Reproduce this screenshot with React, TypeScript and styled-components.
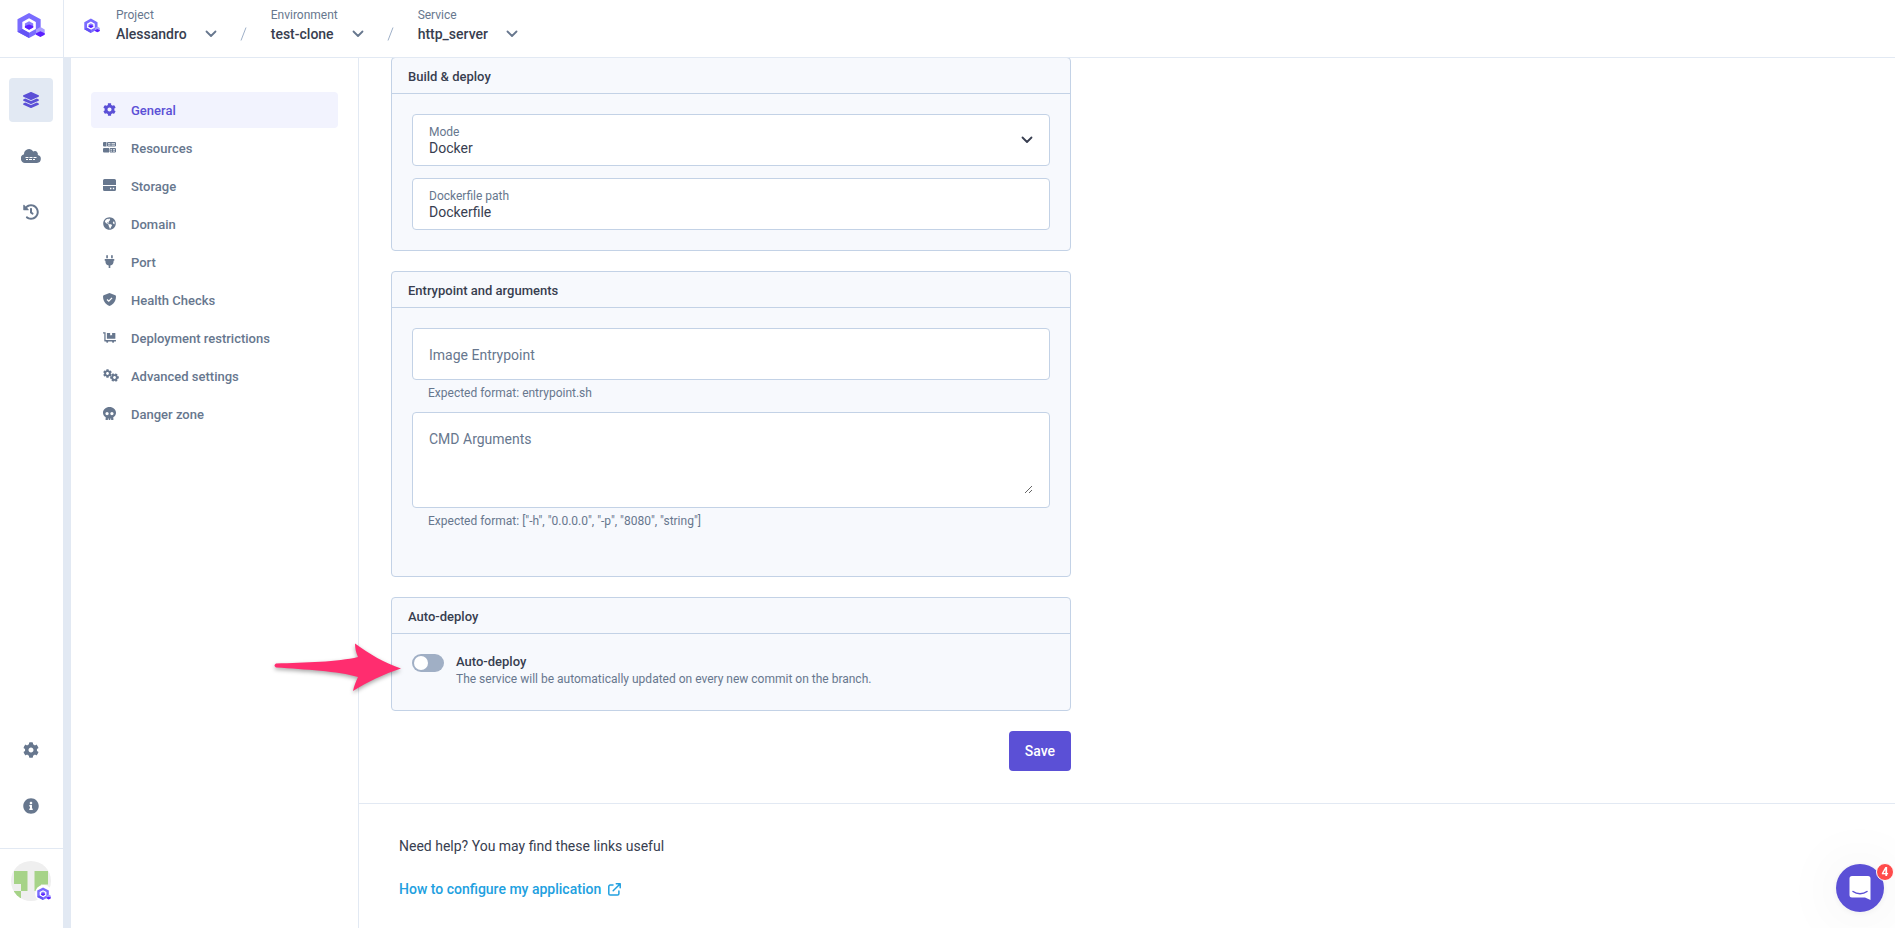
import React, { useState } from 'react';
import styled, { createGlobalStyle } from 'styled-components';
import {
  FaCog,
  FaDollyFlatbed,
  FaGlobeAmericas,
  FaHistory,
  FaInfoCircle,
  FaLayerGroup,
  FaPlug,
  FaSkull,
} from 'react-icons/fa';

const color = {
  brand: '#5b50d6',
  brandSoft: '#f2f3fe',
  line: '#e2e9f3',
  cardLine: '#c3d2e6',
  cardBg: '#f7f9fd',
  text: '#383e50',
  muted: '#67778e',
  toggle: '#a0afc5',
  link: '#21a0e0',
  danger: '#ff4b4b',
  arrow: '#ff2d6f',
};

const GlobalStyle = createGlobalStyle`
  *, *::before, *::after { box-sizing: border-box; }
  body {
    margin: 0;
    background: #fff;
    color: ${color.text};
    font-family: Roboto, "Liberation Sans", sans-serif;
    font-size: 14px;
  }
  button, input, select, textarea { font: inherit; color: inherit; }
`;

const Page = styled.div`
  display: flex;
  flex-direction: column;
  height: 100vh;
  overflow: hidden;
`;

const Header = styled.header`
  position: relative;
  z-index: 1;
  display: flex;
  flex: none;
  height: 58px;
  background: #fff;
  border-bottom: 1px solid ${color.line};
`;

const BrandCell = styled.a`
  display: flex;
  width: 64px;
  padding: 12px 0 0 17px;
  border-right: 1px solid ${color.line};
`;

const Breadcrumb = styled.nav`
  display: flex;
  align-items: flex-start;
  padding: 7px 0 0 20px;
`;

const ProjectMark = styled.span`
  display: flex;
  width: 32px;
  padding-top: 11px;
`;

const Crumb = styled.div`
  display: flex;
  flex-direction: column;
`;

const CrumbLabel = styled.span`
  font-size: 12px;
  line-height: 16px;
  color: ${color.muted};
`;

const CrumbButton = styled.button`
  display: flex;
  align-items: center;
  gap: 18px;
  padding: 0;
  border: 0;
  background: none;
  font-weight: 500;
  line-height: 22px;
  cursor: pointer;
  svg { color: ${color.muted}; }
`;

const Slash = styled.span`
  display: flex;
  padding: 20px 24px 0 23px;
`;

const Body = styled.div`
  display: flex;
  flex: 1;
  min-height: 0;
`;

const Rail = styled.nav`
  display: flex;
  flex-direction: column;
  flex: none;
  width: 63px;
`;

const RailGroup = styled.div<{ $bottom?: boolean }>`
  display: flex;
  flex-direction: column;
  align-items: center;
  gap: 12px;
  padding: ${(p) => (p.$bottom ? '0 1px 20px 0' : '20px 1px 0 0')};
  margin-top: ${(p) => (p.$bottom ? 'auto' : '0')};
`;

const RailLink = styled.a<{ $active?: boolean }>`
  display: flex;
  align-items: center;
  justify-content: center;
  width: 44px;
  height: 44px;
  border-radius: 4px;
  color: ${(p) => (p.$active ? color.brand : color.muted)};
  background: ${(p) => (p.$active ? color.line : 'transparent')};
`;

const AccountCell = styled.div`
  display: flex;
  justify-content: center;
  height: 80px;
  padding: 12px 1px 0 0;
  border-top: 1px solid ${color.line};
`;

const AvatarButton = styled.button`
  position: relative;
  width: 40px;
  height: 40px;
  padding: 0;
  border: 0;
  background: none;
  cursor: pointer;
`;

const OrgBadge = styled.span`
  position: absolute;
  right: -1px;
  bottom: -1px;
  display: flex;
  align-items: center;
  justify-content: center;
  width: 17px;
  height: 17px;
  border-radius: 50%;
  background: #fff;
`;

const Workspace = styled.div`
  display: flex;
  flex: 1;
  min-width: 0;
  border-left: 8px solid ${color.line};
`;

const SettingsNav = styled.nav`
  display: flex;
  flex-direction: column;
  flex: none;
  gap: 2px;
  width: 288px;
  padding: 34px 20px;
  border-right: 1px solid ${color.line};
`;

const NavLink = styled.a<{ $active?: boolean }>`
  display: grid;
  grid-template-columns: 28px 1fr;
  align-items: center;
  height: 36px;
  padding-left: 12px;
  border-radius: 4px;
  font-size: 13px;
  font-weight: 500;
  text-decoration: none;
  color: ${(p) => (p.$active ? color.brand : color.muted)};
  background: ${(p) => (p.$active ? color.brandSoft : 'transparent')};
`;

const NavIcon = styled.span`
  display: flex;
  padding-bottom: 2px;
  > svg { width: auto; height: 13px; }
`;

const Main = styled.main`
  flex: 1;
  min-width: 0;
  margin-top: -1px;
`;

const SettingsForm = styled.form`
  display: flex;
  flex-direction: column;
  gap: 20px;
  max-width: 712px;
  padding: 0 0 32px 32px;
`;

const Card = styled.section`
  border: 1px solid ${color.cardLine};
  border-radius: 4px;
  background: ${color.cardBg};
`;

const CardTitle = styled.h2`
  margin: 0;
  padding: 2px 16px 0;
  border-bottom: 1px solid ${color.cardLine};
  font-size: 13px;
  font-weight: 500;
  line-height: 33px;
`;

const CardBody = styled.div<{ $tall?: boolean }>`
  display: flex;
  flex-direction: column;
  gap: 12px;
  padding: 20px 20px ${(p) => (p.$tall ? '48px' : '20px')};
`;

const FieldBox = styled.div<{ $tall?: boolean }>`
  display: flex;
  align-items: center;
  height: ${(p) => (p.$tall ? '96px' : '52px')};
  padding: 0 16px;
  border: 1px solid ${color.cardLine};
  border-radius: 4px;
  background: #fff;
`;

const FieldStack = styled.div`
  display: flex;
  flex: 1;
  flex-direction: column;
`;

const FieldLabel = styled.label`
  font-size: 12px;
  line-height: 16px;
  color: ${color.muted};
`;

const TextInput = styled.input<{ $full?: boolean }>`
  width: 100%;
  height: ${(p) => (p.$full ? '50px' : 'auto')};
  padding: ${(p) => (p.$full ? '2px 0 0' : '0')};
  border: 0;
  outline: 0;
  background: none;
  line-height: 16px;
  &::placeholder { color: ${color.muted}; opacity: 1; }
`;

const Select = styled.select`
  width: 100%;
  padding: 0;
  border: 0;
  outline: 0;
  background: none;
  line-height: 16px;
  appearance: none;
`;

const TextArea = styled.textarea`
  display: block;
  width: 100%;
  height: 68px;
  padding: 5px 0 0;
  border: 0;
  outline: 0;
  background: none;
  line-height: 16px;
  resize: vertical;
  &::placeholder { color: ${color.muted}; opacity: 1; }
`;

const Hint = styled.p`
  margin: 0 0 0 16px;
  padding-top: 5px;
  height: 20px;
  font-size: 12px;
  line-height: 16px;
  color: ${color.muted};
`;

const ToggleRow = styled.div`
  display: flex;
  gap: 12px;
  min-height: 36px;
`;

const Toggle = styled.input`
  appearance: none;
  flex: none;
  width: 32px;
  height: 18px;
  margin: 0;
  padding: 2px;
  border-radius: 9px;
  background: ${color.toggle};
  cursor: pointer;
  &::before {
    content: '';
    display: block;
    width: 14px;
    height: 14px;
    border-radius: 50%;
    background: #fff;
  }
  &:checked { background: ${color.brand}; }
  &:checked::before { margin-left: 14px; }
`;

const ToggleTitle = styled.label`
  display: block;
  font-size: 13px;
  font-weight: 500;
  line-height: 15px;
`;

const ToggleText = styled.p`
  margin: 0;
  font-size: 12px;
  line-height: 20px;
  color: ${color.muted};
`;

const SaveButton = styled.button`
  align-self: flex-end;
  height: 40px;
  padding: 0 16px;
  border: 0;
  border-radius: 4px;
  background: ${color.brand};
  color: #fff;
  font-weight: 500;
  cursor: pointer;
`;

const Help = styled.footer`
  padding: 32px 40px;
  border-top: 1px solid ${color.line};
`;

const HelpText = styled.p`
  margin: 0 0 23px;
  line-height: 20px;
`;

const HelpLink = styled.a`
  display: inline-flex;
  align-items: center;
  gap: 7px;
  font-weight: 500;
  line-height: 20px;
  color: ${color.link};
  text-decoration: none;
`;

const Pointer = styled.svg`
  position: absolute;
  left: 270px;
  top: 640px;
  z-index: 2;
  pointer-events: none;
  filter: drop-shadow(0 2px 2px rgba(0, 0, 0, 0.35));
`;

const ChatButton = styled.button`
  position: fixed;
  right: 11px;
  bottom: 16px;
  display: flex;
  align-items: center;
  justify-content: center;
  width: 48px;
  height: 48px;
  padding: 0;
  border: 0;
  border-radius: 50%;
  background: ${color.brand};
  box-shadow: 0 1px 6px rgba(0, 0, 0, 0.06), 0 2px 60px rgba(0, 0, 0, 0.08);
  cursor: pointer;
`;

const ChatCount = styled.span`
  position: absolute;
  top: -1px;
  right: -10px;
  width: 18px;
  height: 18px;
  border: 1px solid #fff;
  border-radius: 50%;
  background: ${color.danger};
  color: #fff;
  font-size: 12px;
  font-weight: 700;
  line-height: 16px;
  text-align: center;
`;

const Logo = ({ size }: { size: number }) => (
  <svg width={size} height={size} viewBox="0 0 29 29" aria-hidden="true">
    <path fill="#7a6cff" fillRule="evenodd" d="M12.500 1 24.500 7.500v13l-12 6.500-12-6.500v-13zM12.500 6.500 5.500 10.300v7.400l7 3.800 7-3.800v-7.400z" />
    <path fill="#6553f5" d="M0.500 20.500 5.500 17.700l7 3.800V27z" />
    <path fill="#8a7dff" d="m12.500 9.500 4.300 2.300v4.200l-4.300 2.300-4.300-2.300v-4.200z" />
    <path fill="#5b1fff" d="m12.500 12.900 4.300 1.500v1.600l-4.300 2.300-4.300-2.300v-1.600z" />
    <path fill="#a99fff" d="m24.200 15.500 4.500 2.500v5l-4.500 2.500-4.500-2.500v-5z" />
    <path fill="#5b1fff" d="m24.200 20 4.500 2v1.500l-4.500 2.500-4.500-2.500V22z" />
  </svg>
);

const Chevron = () => (
  <svg width="12" height="8" viewBox="0 0 12 8" fill="none" stroke="currentColor" strokeWidth="1.800" strokeLinecap="round" strokeLinejoin="round" aria-hidden="true">
    <path d="m1.500 1.500 4.500 4.500 4.500-4.500" />
  </svg>
);

const SlashMark = () => (
  <svg width="7" height="14" viewBox="0 0 7 14" stroke="#9fb0c8" strokeWidth="1" aria-hidden="true">
    <path d="M6 .5 1 13.500" />
  </svg>
);

const CloudIcon = () => (
  <svg width="20" height="14" viewBox="0 0 20 14" aria-hidden="true">
    <path fill="currentColor" d="M16.700 6.100A3 3 0 0 0 13.900 2.100c-.6 0-1.200.2-1.600.5A5 5 0 0 0 3 5v.2A4.500 4.500 0 0 0 4.500 14H16a4 4 0 0 0 .7-7.900z" />
    <path fill="none" stroke="#fff" strokeWidth="1" d="M4.500 8.500h3M8.500 8.500h3M12.500 8.500h3M5 10.500h2M8 10.500h3M12 10.500h2" />
  </svg>
);

const ResourcesIcon = () => (
  <svg viewBox="0 0 13 13" aria-hidden="true">
    <path fill="currentColor" d="M1 1h2.500v4.500H1a1 1 0 0 1-1-1V2a1 1 0 0 1 1-1zM1 7h5v4.500H1a1 1 0 0 1-1-1V8a1 1 0 0 1 1-1z" />
    <path fill="none" stroke="currentColor" d="M4.500 1.500h8V5h-8zM8 1.500V5M5 3.200h7.500M7 7.500h5.500V11H7zM9.500 7.500V11M7 9.200h5.500" />
  </svg>
);

const StorageIcon = () => (
  <svg viewBox="0 0 13 13" aria-hidden="true">
    <path fill="currentColor" d="M1.500 0h10A1.500 1.500 0 0 1 13 1.500V6H0V1.500A1.500 1.500 0 0 1 1.500 0z" />
    <path fill="currentColor" fillRule="evenodd" d="M0 7h13v3.500a1.500 1.500 0 0 1-1.500 1.500h-10A1.500 1.500 0 0 1 0 10.500zM7 8.800v1.400h1.400V8.800zM9.800 8.800v1.400h1.400V8.800z" />
  </svg>
);

const GearsIcon = () => (
  <svg viewBox="0 0 16 13" aria-hidden="true">
    <FaCog size={9} x={0} y={0} />
    <g transform="rotate(30 11.500 8.500)">
      <FaCog size={9} x={7} y={4} />
    </g>
  </svg>
);

const ShieldCheckIcon = () => (
  <svg viewBox="0 0 13 13" aria-hidden="true">
    <path fill="currentColor" d="M6.500 0 12.300 2.200c.4.200.7.500.7 1 0 4.300-2 7.900-6.500 9.800C2 11.100 0 7.500 0 3.200c0-.5.300-.8.700-1z" />
    <path fill="none" stroke="#fff" strokeWidth="1.300" d="m4 6.500 1.800 1.700 3.200-3.300" />
  </svg>
);

const ExternalIcon = () => (
  <svg width="13" height="13" viewBox="0 0 13 13" fill="none" stroke="currentColor" strokeWidth="1.500" strokeLinecap="round" strokeLinejoin="round" aria-hidden="true">
    <path d="M5 2H2.200A1.400 1.400 0 0 0 .8 3.400v7.300a1.400 1.400 0 0 0 1.400 1.400h7.300a1.400 1.400 0 0 0 1.400-1.400V8M8.300.8h3.900v3.900M12 1 5.200 7.800" />
  </svg>
);

const AvatarArt = () => (
  <svg width="40" height="40" viewBox="0 0 40 40" aria-hidden="true">
    <clipPath id="avatar-clip">
      <circle cx="20" cy="20" r="20" />
    </clipPath>
    <g clipPath="url(#avatar-clip)">
      <path fill="#efefef" d="M0 0h40v40H0z" />
      <path fill="#a6d388" d="M3 10h13.500v20H10v-7H3zM23.500 10H37v13.500h-7V30h-6.500zM3 30h7v7H3zM30 30h7v7h-7z" />
    </g>
  </svg>
);

const crumbs = [
  { label: 'Project', name: 'Alessandro' },
  { label: 'Environment', name: 'test-clone' },
  { label: 'Service', name: 'http_server' },
];

const settings = [
  { name: 'General', icon: <FaCog /> },
  { name: 'Resources', icon: <ResourcesIcon /> },
  { name: 'Storage', icon: <StorageIcon /> },
  { name: 'Domain', icon: <FaGlobeAmericas /> },
  { name: 'Port', icon: <FaPlug /> },
  { name: 'Health Checks', icon: <ShieldCheckIcon /> },
  { name: 'Deployment restrictions', icon: <FaDollyFlatbed /> },
  { name: 'Advanced settings', icon: <GearsIcon /> },
  { name: 'Danger zone', icon: <FaSkull /> },
];

export default function App() {
  const [autoDeploy, setAutoDeploy] = useState(false);
  const [path, setPath] = useState('Dockerfile');

  return (
    <Page>
      <GlobalStyle />
      <Header>
        <BrandCell href="#" aria-label="Home">
          <Logo size={28} />
        </BrandCell>
        <Breadcrumb aria-label="Breadcrumb">
          <ProjectMark>
            <Logo size={16} />
          </ProjectMark>
          {crumbs.map((crumb, i) => (
            <React.Fragment key={crumb.label}>
              {i > 0 && (
                <Slash>
                  <SlashMark />
                </Slash>
              )}
              <Crumb>
                <CrumbLabel>{crumb.label}</CrumbLabel>
                <CrumbButton type="button">
                  {crumb.name}
                  <Chevron />
                </CrumbButton>
              </Crumb>
            </React.Fragment>
          ))}
        </Breadcrumb>
      </Header>

      <Body>
        <Rail aria-label="Main">
          <RailGroup>
            <RailLink href="#environments" $active aria-label="Environments">
              <FaLayerGroup size={16} />
            </RailLink>
            <RailLink href="#clusters" aria-label="Clusters">
              <CloudIcon />
            </RailLink>
            <RailLink href="#audit" aria-label="Audit logs">
              <FaHistory size={16} />
            </RailLink>
          </RailGroup>
          <RailGroup $bottom>
            <RailLink href="#settings" aria-label="Settings">
              <FaCog size={16} />
            </RailLink>
            <RailLink href="#info" aria-label="Information">
              <FaInfoCircle size={16} />
            </RailLink>
          </RailGroup>
          <AccountCell>
            <AvatarButton type="button" aria-label="Account">
              <AvatarArt />
              <OrgBadge>
                <Logo size={14} />
              </OrgBadge>
            </AvatarButton>
          </AccountCell>
        </Rail>

        <Workspace>
          <SettingsNav aria-label="Service settings">
            {settings.map((item, i) => (
              <NavLink key={item.name} href="#" $active={i === 0}>
                <NavIcon>{item.icon}</NavIcon>
                {item.name}
              </NavLink>
            ))}
          </SettingsNav>

          <Main>
            <SettingsForm onSubmit={(e) => e.preventDefault()}>
              <Card>
                <CardTitle>Build &amp; deploy</CardTitle>
                <CardBody>
                  <FieldBox>
                    <FieldStack>
                      <FieldLabel htmlFor="mode">Mode</FieldLabel>
                      <Select id="mode" defaultValue="Docker">
                        <option>Docker</option>
                        <option>Buildpacks</option>
                      </Select>
                    </FieldStack>
                    <Chevron />
                  </FieldBox>
                  <FieldBox>
                    <FieldStack>
                      <FieldLabel htmlFor="path">Dockerfile path</FieldLabel>
                      <TextInput id="path" value={path} onChange={(e) => setPath(e.target.value)} />
                    </FieldStack>
                  </FieldBox>
                </CardBody>
              </Card>

              <Card>
                <CardTitle>Entrypoint and arguments</CardTitle>
                <CardBody $tall>
                  <div>
                    <FieldBox>
                      <TextInput $full aria-label="Image Entrypoint" placeholder="Image Entrypoint" />
                    </FieldBox>
                    <Hint>Expected format: entrypoint.sh</Hint>
                  </div>
                  <div>
                    <FieldBox $tall>
                      <TextArea aria-label="CMD Arguments" placeholder="CMD Arguments" />
                    </FieldBox>
                    <Hint>Expected format: ["-h", "0.0.0.0", "-p", "8080", "string"]</Hint>
                  </div>
                </CardBody>
              </Card>

              <Card>
                <CardTitle>Auto-deploy</CardTitle>
                <CardBody>
                  <ToggleRow>
                    <Toggle
                      id="auto-deploy"
                      type="checkbox"
                      role="switch"
                      checked={autoDeploy}
                      onChange={(e) => setAutoDeploy(e.target.checked)}
                    />
                    <div>
                      <ToggleTitle htmlFor="auto-deploy">Auto-deploy</ToggleTitle>
                      <ToggleText>The service will be automatically updated on every new commit on the branch.</ToggleText>
                    </div>
                  </ToggleRow>
                </CardBody>
              </Card>

              <SaveButton type="submit">Save</SaveButton>
            </SettingsForm>

            <Help>
              <HelpText>Need help? You may find these links useful</HelpText>
              <HelpLink href="#docs">
                How to configure my application
                <ExternalIcon />
              </HelpLink>
            </Help>
          </Main>
        </Workspace>
      </Body>

      <Pointer width="136" height="56" viewBox="0 0 136 56" aria-hidden="true">
        <path
          fill={color.arrow}
          d="M6 23.500C35 22.500 68 22 88 17c-2-4-3-9-3-13.500C99 14 115 23 131 28.500 114 34 97 42 83 51c1-5 3-10 5-14C68 31 35 29.500 6 27.500c-2-1-2-3 0-4z"
        />
      </Pointer>

      <ChatButton type="button" aria-label="Open chat">
        <svg width="24" height="26" viewBox="0 0 24 26" aria-hidden="true">
          <path fill="#fff" d="M4 1h16a2.500 2.500 0 0 1 2.500 2.500V25L17 22.500H4A2.500 2.500 0 0 1 1.500 20V3.500A2.500 2.500 0 0 1 4 1z" />
          <path fill="none" stroke={color.brand} strokeWidth="1.500" strokeLinecap="round" d="M5 16.500c4 3 10 3 14 0" />
        </svg>
        <ChatCount>4</ChatCount>
      </ChatButton>
    </Page>
  );
}
